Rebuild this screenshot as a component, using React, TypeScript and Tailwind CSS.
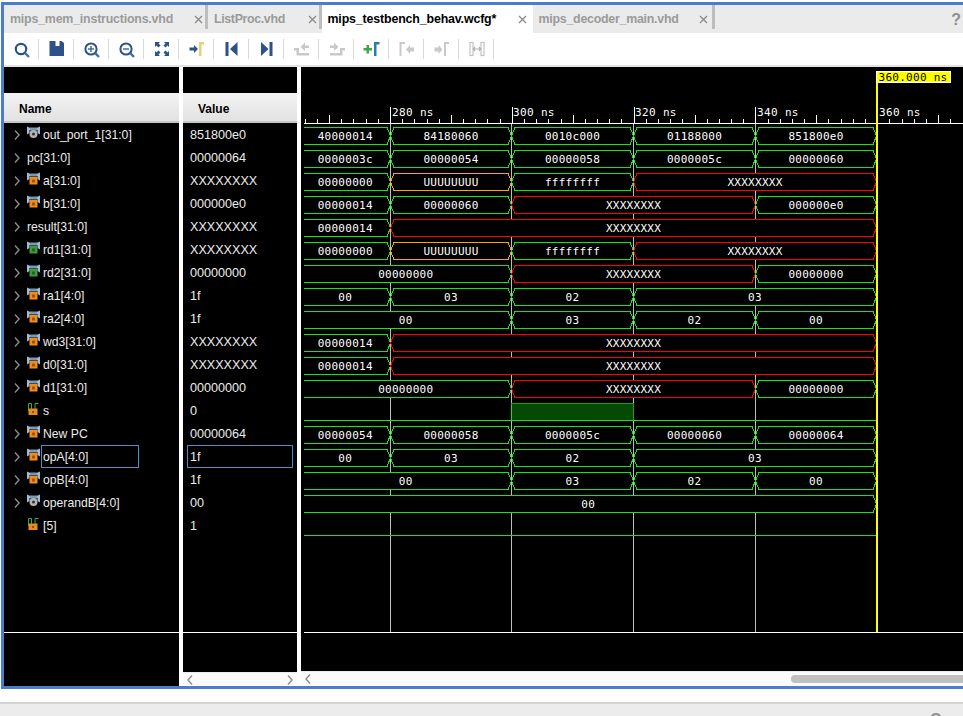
import React from "react";

const GREEN = "#14e614";
const RED = "#ff0000";
const ORANGE = "#ffa500";
const T = [390.5, 511.5, 633.5, 755.5];
const END = 876.5;
const START = 304;

type Seg = [number, number, string, string?];
const g = (a: number, b: number, t: string): Seg => [a, b, t, GREEN];
const r = (a: number, b: number): Seg => [a, b, "XXXXXXXX", RED];
const o = (a: number, b: number, t: string): Seg => [a, b, t, ORANGE];

const [A, B, C, D] = T;

const WAVES: (Seg[] | string)[] = [
  [g(START, A, "40000014"), g(A, B, "84180060"), g(B, C, "0010c000"), g(C, D, "01188000"), g(D, END, "851800e0")],
  [g(START, A, "0000003c"), g(A, B, "00000054"), g(B, C, "00000058"), g(C, D, "0000005c"), g(D, END, "00000060")],
  [g(START, A, "00000000"), o(A, B, "UUUUUUUU"), g(B, C, "ffffffff"), r(C, END)],
  [g(START, A, "00000014"), g(A, B, "00000060"), r(B, D), g(D, END, "000000e0")],
  [g(START, A, "00000014"), r(A, END)],
  [g(START, A, "00000000"), o(A, B, "UUUUUUUU"), g(B, C, "ffffffff"), r(C, END)],
  [g(START, B, "00000000"), r(B, D), g(D, END, "00000000")],
  [g(START, A, "00"), g(A, B, "03"), g(B, C, "02"), g(C, END, "03")],
  [g(START, B, "00"), g(B, C, "03"), g(C, D, "02"), g(D, END, "00")],
  [g(START, A, "00000014"), r(A, END)],
  [g(START, A, "00000014"), r(A, END)],
  [g(START, B, "00000000"), r(B, D), g(D, END, "00000000")],
  "s",
  [g(START, A, "00000054"), g(A, B, "00000058"), g(B, C, "0000005c"), g(C, D, "00000060"), g(D, END, "00000064")],
  [g(START, A, "00"), g(A, B, "03"), g(B, C, "02"), g(C, END, "03")],
  [g(START, B, "00"), g(B, C, "03"), g(C, D, "02"), g(D, END, "00")],
  [g(START, END, "00")],
  "low",
];

type Kind = "gray" | "orange" | "green" | "bit" | "none";
const SIGNALS: { name: string; value: string; icon: Kind; chevron: boolean; selected?: boolean }[] = [
  { name: "out_port_1[31:0]", value: "851800e0", icon: "gray", chevron: true },
  { name: "pc[31:0]", value: "00000064", icon: "none", chevron: true },
  { name: "a[31:0]", value: "XXXXXXXX", icon: "orange", chevron: true },
  { name: "b[31:0]", value: "000000e0", icon: "orange", chevron: true },
  { name: "result[31:0]", value: "XXXXXXXX", icon: "none", chevron: true },
  { name: "rd1[31:0]", value: "XXXXXXXX", icon: "green", chevron: true },
  { name: "rd2[31:0]", value: "00000000", icon: "green", chevron: true },
  { name: "ra1[4:0]", value: "1f", icon: "orange", chevron: true },
  { name: "ra2[4:0]", value: "1f", icon: "orange", chevron: true },
  { name: "wd3[31:0]", value: "XXXXXXXX", icon: "orange", chevron: true },
  { name: "d0[31:0]", value: "XXXXXXXX", icon: "orange", chevron: true },
  { name: "d1[31:0]", value: "00000000", icon: "orange", chevron: true },
  { name: "s", value: "0", icon: "bit", chevron: false },
  { name: "New PC", value: "00000064", icon: "orange", chevron: true },
  { name: "opA[4:0]", value: "1f", icon: "orange", chevron: true, selected: true },
  { name: "opB[4:0]", value: "1f", icon: "orange", chevron: true },
  { name: "operandB[4:0]", value: "00", icon: "gray", chevron: true },
  { name: "[5]", value: "1", icon: "bit", chevron: false },
];

function SignalIcon({ kind }: { kind: Kind }) {
  if (kind === "none") return null;
  if (kind === "bit")
    return (
      <svg width="13" height="14" viewBox="0 0 13 14" className="mb-[3px] shrink-0">
        <path d="M1.5 9V1.5H4.5V9M8 9V1.5H11.5" fill="none" stroke="#2fb040" strokeWidth="1" />
        <rect x="1.5" y="6.5" width="9" height="6.5" fill="#e88a1e" />
        <rect x="5" y="9" width="2" height="2" fill="#8a5010" />
      </svg>
    );
  const fill = kind === "orange" ? "#f08c1c" : kind === "green" ? "#3f9a3f" : "#c8c8c8";
  return (
    <svg width="13" height="14" viewBox="0 0 13 14" className="mb-[4px] shrink-0">
      <path d="M0 0.5L4.5 2.5H8.5L13 0.5V8.5L10.5 7V4H2.5V7L0 8.5Z" fill="#9dbdd6" />
      <rect x="3" y="1.5" width="7" height="3" fill="#7a98b2" />
      {kind === "gray" ? (
        <>
          <circle cx="6.5" cy="8" r="4" fill="#b4b4b4" />
          <circle cx="6.5" cy="8" r="1.6" fill="#3a3a3a" />
        </>
      ) : (
        <>
          <rect x="2.5" y="5" width="8" height="7.5" fill={fill} />
          <rect x="5.2" y="7.5" width="2.6" height="3" fill={kind === "orange" ? "#8a5010" : "#1c5c1c"} />
        </>
      )}
    </svg>
  );
}

function Chevron({ dir = "right", color = "#8c8c8c" }: { dir?: "left" | "right"; color?: string }) {
  return (
    <svg width="6" height="10" viewBox="0 0 6 10" className="shrink-0">
      <path d={dir === "right" ? "M1 0.5L5 5L1 9.5" : "M5 0.5L1 5L5 9.5"} fill="none" stroke={color} strokeWidth="1.4" />
    </svg>
  );
}

function Close() {
  return (
    <svg width="9" height="9" viewBox="0 0 9 9" className="shrink-0">
      <path d="M1 1L8 8M8 1L1 8" stroke="#8a8a8a" strokeWidth="1.3" />
    </svg>
  );
}

const BLUE = "#2c5288";
const GRAY = "#c9c9c9";

const ICONS: React.ReactNode[] = [
  <g key="s">
    <circle cx="9" cy="10" r="5.2" fill="none" stroke={BLUE} strokeWidth="2.2" />
    <path d="M13 14L17 18" stroke="#3f6ea8" strokeWidth="2.4" />
  </g>,
  <path key="v" d="M2.5 2H8.5V7H12.5V2H14.5L17 4V17H2.5Z" fill={BLUE} />,
  <g key="i">
    <circle cx="9" cy="10" r="5.6" fill="none" stroke={BLUE} strokeWidth="2" />
    <path d="M9 7V13M6 10H12" stroke="#3f6ea8" strokeWidth="1.5" />
    <path d="M13.2 14.2L17 18" stroke="#3f6ea8" strokeWidth="2.4" />
  </g>,
  <g key="o">
    <circle cx="9" cy="10" r="5.6" fill="none" stroke={BLUE} strokeWidth="2" />
    <path d="M6 10H12" stroke="#3f6ea8" strokeWidth="1.5" />
    <path d="M13.2 14.2L17 18" stroke="#3f6ea8" strokeWidth="2.4" />
  </g>,
  <g key="f" fill={BLUE}>
    <path d="M3 3H8L6.5 4.5L8.5 6.5L6.5 8.5L4.5 6.5L3 8Z" />
    <path d="M17 3H12L13.5 4.5L11.5 6.5L13.5 8.5L15.5 6.5L17 8Z" />
    <path d="M3 17H8L6.5 15.5L8.5 13.5L6.5 11.5L4.5 13.5L3 12Z" />
    <path d="M17 17H12L13.5 15.5L11.5 13.5L13.5 11.5L15.5 13.5L17 12Z" />
  </g>,
  <g key="c">
    <path d="M2.5 8.5H7V6L11 10L7 14V11.5H2.5Z" fill={BLUE} />
    <path d="M12 17V3H17V5.5H14.5V17Z" fill="#e6d078" />
  </g>,
  <g key="a" fill={BLUE}>
    <rect x="3.5" y="3" width="3" height="14" />
    <path d="M15.5 3V17L8 10Z" />
  </g>,
  <g key="z" fill={BLUE}>
    <path d="M4 3V17L11.5 10Z" />
    <rect x="12.5" y="3" width="3" height="14" />
  </g>,
  <g key="p" fill={GRAY}>
    <path d="M2 9H7V14H17V16.5H4.5V11.5H2Z" />
    <path d="M17 6.5H13V3.5L8.5 8L13 12V9H17Z" />
  </g>,
  <g key="n" fill={GRAY}>
    <path d="M18 9H13V14H3V16.5H15.5V11.5H18Z" />
    <path d="M3 6.5H7V3.5L11.5 8L7 12V9H3Z" />
  </g>,
  <g key="m">
    <path d="M1.5 9H4.5V6H7V9H10V11.5H7V14.5H4.5V11.5H1.5Z" fill="#3aa843" />
    <path d="M12 17V3H17.5V5.5H14.5V17Z" fill="#2a7ab0" />
  </g>,
  <g key="q" fill={GRAY}>
    <path d="M2.5 17V3H8V5H4.5V17Z" />
    <path d="M17 8.5H13V6L9 10.5L13 15V12.5H17Z" />
  </g>,
  <g key="w" fill={GRAY}>
    <path d="M2.5 8.5H6.5V6L10.5 10.5L6.5 15V12.5H2.5Z" />
    <path d="M12 17V3H17V5H14V17Z" />
  </g>,
  <g key="e" fill="none" stroke="#c4c4c4" strokeWidth="1.2">
    <rect x="3" y="3.5" width="3" height="13" />
    <rect x="14" y="3.5" width="3" height="13" />
    <path d="M6 10H14M8 8L6.2 10L8 12M12 8L13.8 10L12 12" stroke="#b0b0b0" />
  </g>,
];

function Waves() {
  const ticks: React.ReactNode[] = [];
  const pitch = 121.8 / 10;
  for (let i = -7; i < 55; i++) {
    const x = Math.round(390 + i * pitch) + 0.5;
    if (x > 962) break;
    const top = i % 10 === 0 ? 107 : i % 5 === 0 ? 115 : 119;
    ticks.push(<line key={i} x1={x} x2={x} y1={top} y2={123} stroke="#fff" />);
  }
  return (
    <svg width="662" height="604" viewBox="301 67 662 604" className="block shrink-0" shapeRendering="crispEdges">
      <rect x="301" y="67" width="662" height="604" fill="#000" />
      <line x1="304" x2="963" y1="123.5" y2="123.5" stroke="#fff" />
      {ticks}
      {[
        [392, "280 ns"],
        [513, "300 ns"],
        [635, "320 ns"],
        [757, "340 ns"],
        [879, "360 ns"],
      ].map(([x, t]) => (
        <text key={t} x={x} y={116} fill="#fff" fontFamily="'DejaVu Sans Mono', monospace" fontSize="11" letterSpacing="0.35" shapeRendering="auto">
          {t}
        </text>
      ))}
      {T.map((x) => (
        <line key={x} x1={x} x2={x} y1={124} y2={632} stroke="#bdbdbd" />
      ))}
      {WAVES.map((row, i) => {
        const top = 127.5 + 23 * i;
        const bot = top + 17;
        const mid = top + 8.5;
        if (row === "low") return <line key={i} x1={START} x2={END} y1={bot} y2={bot} stroke={GREEN} />;
        if (row === "s")
          return (
            <g key={i}>
              <rect x={511.5} y={top} width={122} height={17} fill="#044a04" stroke="#1aa01a" />
              <line x1={START} x2={END} y1={bot} y2={bot} stroke={GREEN} />
              <line x1={511.5} x2={511.5} y1={top} y2={bot} stroke={GREEN} />
            </g>
          );
        return (
          <g key={i}>
            {(row as Seg[]).map(([a, b, t, c]) => {
              const left = a === START ? `${a},${top} ` : `${a},${mid} ${a + 3.5},${top} `;
              const leftB = a === START ? `${a},${bot}` : `${a + 3.5},${bot}`;
              const pts = `${left}${b - 3.5},${top} ${b},${mid} ${b - 3.5},${bot} ${leftB}`;
              const d =
                a === START
                  ? `M${a} ${top}H${b - 3.5}L${b} ${mid}L${b - 3.5} ${bot}H${a}`
                  : `M${a} ${mid}L${a + 3.5} ${top}H${b - 3.5}L${b} ${mid}L${b - 3.5} ${bot}H${a + 3.5}Z`;
              const cx = ((a === START ? 300 : a) + b) / 2;
              return (
                <g key={a}>
                  <polygon points={pts} fill="#000" />
                  <path d={d} fill="none" stroke={c} />
                  <text
                    x={cx}
                    y={top + 12.5}
                    fill="#fff"
                    textAnchor="middle"
                    fontFamily="'DejaVu Sans Mono', monospace"
                    fontSize="11"
                    letterSpacing="0.28"
                    shapeRendering="auto"
                  >
                    {t}
                  </text>
                </g>
              );
            })}
          </g>
        );
      })}
      <line x1="304" x2="963" y1="632.5" y2="632.5" stroke="#fff" />
      <rect x="876" y="83" width="2" height="549" fill="#ffff00" />
      <rect x="876.5" y="71.5" width="74" height="11" fill="#ffff00" stroke="#fff" />
      <text x="878.5" y="81" fill="#000" fontFamily="'DejaVu Sans Mono', monospace" fontSize="11" letterSpacing="0.28" shapeRendering="auto">
        360.000 ns
      </text>
    </svg>
  );
}

const tabs = [
  { label: "mips_mem_instructions.vhd", w: "w-[201px]", pad: "pl-[6px] pr-[2px]", track: "tracking-[-0.2px]", sep: true },
  { label: "ListProc.vhd", w: "w-[111px]", pad: "pl-[6px] pr-[2px]", track: "tracking-[-0.35px]", sep: true },
  { label: "mips_testbench_behav.wcfg*", w: "w-[211px]", pad: "pl-[5.5px] pr-[6px]", track: "tracking-[-0.15px]", active: true },
  { label: "mips_decoder_main.vhd", w: "w-[179px]", pad: "pl-[5.5px] pr-[4px]", track: "tracking-[-0.25px]", sep: true },
];

export default function App() {
  return (
    <div className="relative w-[963px] h-[716px] overflow-hidden bg-white font-['Liberation_Sans',Arial,sans-serif]">
      <div className="h-[2px]" />
      <div className="ml-[1px] w-[980px] h-[687px] border-[3px] border-[#4a7dcc] flex flex-col">
        {/* tabs */}
        <div className="h-[28px] bg-[#ebebeb] flex w-[959px] shrink-0 relative">
          {tabs.map((t) => (
            <React.Fragment key={t.label}>
              <div className={`${t.w} ${t.pad} flex items-center justify-between ${t.active ? "bg-white" : ""}`}>
                <span className={`text-[12.4px] font-bold ${t.active ? "text-black" : "text-[#9a9a9a]"} ${t.track}`}>
                  {t.label}
                </span>
                <Close />
              </div>
              {t.sep && <div className="w-[3px] h-[24px] bg-[#bdbdbd] shrink-0" />}
            </React.Fragment>
          ))}
          <span className="absolute right-[2px] top-[3px] text-[16px] font-bold text-[#8e8e8e]">?</span>
        </div>
        {/* toolbar */}
        <div className="h-[34px] flex shrink-0 border-b-2 border-b-[#e4e4e4] w-[959px] items-start">
          <div className="h-[32px] flex items-center">
            {ICONS.map((ic, i) => (
              <div key={i} className="w-[35px] h-[32px] flex items-center relative">
                <svg width="20" height="20" viewBox="0 0 20 20" className="ml-[7.5px]">
                  {ic}
                </svg>
                <div className="absolute right-[0.5px] top-[6px] w-[1px] h-[20px] bg-[#d8d8d8]" />
              </div>
            ))}
          </div>
        </div>
        {/* panels */}
        <div className="h-[619px] flex bg-white text-[#ececec] w-[959px]">
          <div className="w-[175px] flex flex-col bg-black shrink-0">
            <div className="h-[26px]" />
            <div className="h-[30px] bg-linear-to-b from-[#f3f3f3] to-[#e2e2e2] border-b-2 border-b-[#c6c6c6] flex items-center pl-[15px] pt-[3px] text-[12px] font-bold text-black">
              Name
            </div>
            <div className="h-[509px]">
              {SIGNALS.map((s) => (
                <div key={s.name} className="h-[23px] flex items-center">
                  <div className="w-[23px] flex justify-center pl-[2px] shrink-0">{s.chevron && <Chevron />}</div>
                  <SignalIcon kind={s.icon} />
                  {s.selected ? (
                    <span className="ml-[1px] w-[98px] h-[23px] border border-[#4a90c4] pl-[1px] pt-[2px] flex items-center text-[12.2px]">{s.name}</span>
                  ) : (
                    <span className={`mt-[2px] text-[12.2px] ${s.icon === "none" ? "" : "ml-[3px]"}`}>{s.name}</span>
                  )}
                </div>
              ))}
            </div>
            <div className="h-[1px] bg-white" />
            <div className="flex-1" />
          </div>
          <div className="w-[4px] shrink-0" />
          <div className="w-[114px] flex flex-col shrink-0">
            <div className="h-[26px] bg-black" />
            <div className="h-[30px] bg-linear-to-b from-[#f3f3f3] to-[#e2e2e2] border-b-2 border-b-[#c6c6c6] flex items-center pl-[15px] pt-[3px] text-[12px] font-bold text-black">
              Value
            </div>
            <div className="h-[509px] bg-black">
              {SIGNALS.map((s) => (
                <div key={s.name} className="h-[23px] flex items-center">
                  {s.selected ? (
                    <span className="ml-[4px] w-[106px] h-[23px] border border-[#4a90c4] pl-[2px] pt-[2px] flex items-center text-[12.6px]">{s.value}</span>
                  ) : (
                    <span className="mt-[2px] pl-[7px] text-[12.6px]">{s.value}</span>
                  )}
                </div>
              ))}
            </div>
            <div className="h-[1px] bg-white" />
            <div className="h-[39px] bg-black" />
            <div className="flex-1 bg-[#fafafa] border-t border-t-[#ececec] flex items-center justify-between px-[4px]">
              <Chevron dir="left" />
              <Chevron dir="right" />
            </div>
          </div>
          <div className="w-[4px] shrink-0" />
          <div className="flex-1 flex flex-col min-w-0">
            <Waves />
            <div className="flex-1 bg-[#fafafa] border-t border-t-[#ececec] flex items-center pl-[4px] pr-0">
              <Chevron dir="left" />
              <div className="ml-auto w-[172px] h-[8px] rounded-l-[4px] bg-[#c0c0c0]" />
            </div>
          </div>
        </div>
      </div>
      <div className="h-[13px]" />
      <div className="h-[14px] bg-[#ececec] border-t-2 border-t-[#d4d4d4] flex justify-end pr-[21px] overflow-hidden">
        <svg width="12" height="12" viewBox="0 0 12 12" className="mt-[9px]">
          <path d="M1.5 5C2 2 4 1 6 1C8 1 10 2 10.5 5" fill="none" stroke="#8e8e8e" strokeWidth="2" />
        </svg>
      </div>
    </div>
  );
}
